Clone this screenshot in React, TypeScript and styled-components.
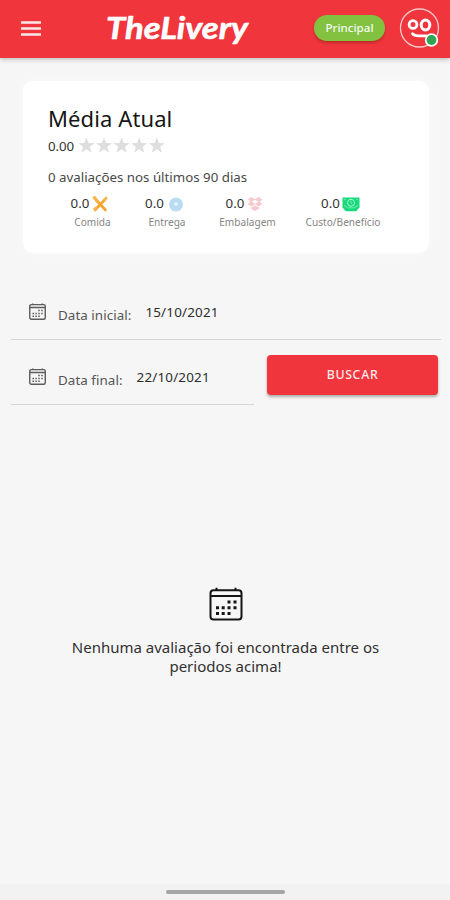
import React from "react";
import styled, { createGlobalStyle } from "styled-components";

const GlobalStyle = createGlobalStyle`
  * { box-sizing: border-box; }
  body {
    margin: 0;
    background: #f6f6f6;
    font-family: "Noto Sans", "Open Sans", sans-serif;
    color: #333;
  }
`;

const Screen = styled.div`
  width: 450px;
  height: 900px;
  display: flex;
  flex-direction: column;
  overflow: hidden;
  background: #f6f6f6;
`;

const Header = styled.header`
  height: 58px;
  flex: none;
  display: flex;
  align-items: flex-start;
  background: #f0353d;
  box-shadow: 0 1px 5px rgba(0, 0, 0, 0.28);
`;

const MenuIcon = styled.svg`
  width: 20px;
  height: 16px;
  margin: 20px 0 0 21px;
`;

const Logo = styled.svg`
  width: 150px;
  height: 50px;
  margin: 6px 0 0 61px;
`;

const LogoText = styled.text`
  font: italic 700 31px Lato, sans-serif;
  fill: #fff;
  stroke: #fff;
  stroke-width: 0.6px;
  stroke-linejoin: round;
`;

const Badge = styled.div`
  width: 71px;
  height: 26px;
  margin: 15px 0 0 62px;
  border-radius: 13px;
  background: #83c241;
  color: #f5f9ef;
  font-size: 11.6px;
  font-weight: 500;
  line-height: 25px;
  text-align: center;
  box-shadow: 0 2px 3px rgba(90, 30, 0, 0.35);
`;

const Avatar = styled.svg`
  width: 42px;
  height: 42px;
  margin: 7px 0 0 14px;
`;

const Card = styled.section`
  flex: none;
  width: 406px;
  height: 172px;
  margin: 23px 0 0 23px;
  padding: 23px 0 0 25px;
  border-radius: 11px;
  background: #fff;
  box-shadow: 0 0 7px rgba(255, 255, 255, 0.8);
`;

const Title = styled.h1`
  margin: 0;
  height: 30px;
  color: #161616;
  font-size: 22px;
  font-weight: 400;
  line-height: 29px;
  letter-spacing: 0.1px;
`;

const ScoreRow = styled.div`
  display: flex;
  align-items: center;
  height: 24px;
  font-size: 13.3px;
  letter-spacing: -0.1px;
`;

const Stars = styled.svg`
  width: 90px;
  height: 18px;
  margin: -3px 0 0 3px;
`;

const Summary = styled.p`
  margin: 9px 0 0;
  height: 20px;
  font-size: 13.3px;
  line-height: 20px;
  color: #484848;
  white-space: nowrap;
`;

const Stats = styled.div`
  display: grid;
  grid-template-columns: 84px 65px 96px 95px;
  margin-top: 7px;
`;

const StatValue = styled.div`
  display: flex;
  justify-content: center;
  align-items: center;
  gap: 2px;
  height: 18px;
  font-size: 13.3px;

  svg {
    width: 18px;
    height: 18px;
    margin-top: 2px;
  }
`;

const StatLabel = styled.div`
  display: flex;
  justify-content: center;
  padding-left: 5px;
  height: 20px;
  font-size: 10.1px;
  line-height: 20px;
  color: #858585;
  white-space: nowrap;
`;

const DateField = styled.div<{ $short?: boolean }>`
  display: flex;
  align-items: flex-start;
  width: ${(p) => (p.$short ? 243 : 430)}px;
  height: ${(p) => (p.$short ? 65 : 51)}px;
  padding: ${(p) => (p.$short ? 27 : 13)}px 0 0 18px;
  margin-left: 11px;
  border-bottom: 1px solid #d6d6d6;
`;

const FieldIcon = styled.svg`
  width: 17px;
  height: 17px;
  margin-top: 1px;
  flex: none;
`;

const FieldLabel = styled.span`
  margin: 3px 0 0 12px;
  font-size: 13.4px;
  line-height: 20px;
  letter-spacing: 0.05px;
  color: #555;
  white-space: nowrap;
`;

const FieldValue = styled.span`
  margin: 1px 0 0 14px;
  font-size: 13.4px;
  line-height: 19px;
  letter-spacing: 0.2px;
  color: #2d2d2d;
`;

const Fields = styled.div`
  flex: none;
  margin-top: 36px;
`;

const FieldRow = styled.div`
  display: flex;
`;

const SearchButton = styled.button`
  width: 171px;
  height: 40px;
  margin: 15px 0 0 13px;
  padding: 0 0 1px;
  border: 0;
  border-radius: 4px;
  background: #f0353d;
  color: #fde9e9;
  font: 500 12.3px "Noto Sans", sans-serif;
  letter-spacing: 0.7px;
  box-shadow: 0 2px 3px rgba(0, 0, 0, 0.3);
`;

const Empty = styled.main`
  flex: 1;
  display: flex;
  flex-direction: column;
  align-items: center;
  padding-top: 182px;
`;

const EmptyIcon = styled.svg`
  width: 34px;
  height: 34px;
  margin-left: 1px;
`;

const EmptyText = styled.p`
  margin: 17px 0 0 1px;
  font-size: 15px;
  line-height: 19px;
  text-align: center;
  color: #303030;
`;

const NavBar = styled.footer`
  flex: none;
  display: flex;
  justify-content: center;
  height: 16px;
  padding-top: 6px;
  background: #f2f2f2;
`;

const NavHandle = styled.div`
  width: 119px;
  height: 4px;
  border-radius: 2px;
  background: #a6a6a6;
`;

const CalendarShape = ({ weight = 2 }: { weight?: number }) => (
  <>
    <rect x="1.500" y="3.200" width="31" height="29.300" rx="3" fill="none" stroke="currentColor" strokeWidth={weight} />
    <path d="M1.500 9h31M7.500 0.800v3M26.500 0.800v3" fill="none" stroke="currentColor" strokeWidth={weight} />
    <path
      d="M18.500 13.500h3v3h-3zM24.500 13.500h3v3h-3zM7 19.300h3v3H7zM12.700 19.300h3v3h-3zM18.500 19.300h3v3h-3zM24.500 19.300h3v3h-3zM7 25h3v3H7zM12.700 25h3v3h-3zM18.500 25h3v3h-3z"
      fill="currentColor"
    />
  </>
);

const STAR = "M8 0.500l2 5.300 5.700.2-4.500 3.400 1.700 5.500L8 11.700 3.100 14.900l1.700-5.500L.3 6 6 5.800z";

const FoodIcon = () => (
  <svg viewBox="0 0 18 18">
    <path d="M3.500 3l11 12M14.500 4L4 15" stroke="#f6a42e" strokeWidth="2.600" strokeLinecap="round" />
    <path d="M1.200 2l3-1 4 5.500L6 8.500zM12 4.500L15.200 1.200l1.600 1.600-3.300 3.500z" fill="#f9b44c" />
    <path d="M2 14l2.500-2.500 2.500 2.500-3 2.500z" fill="#f9b44c" />
  </svg>
);

const DeliveryIcon = () => (
  <svg viewBox="0 0 18 18">
    <circle cx="10" cy="9.500" r="6.900" fill="#b9dcf3" />
    <circle cx="10" cy="9" r="1.800" fill="#edf8fe" />
  </svg>
);

const PackageIcon = () => (
  <svg viewBox="0 0 18 18">
    <path d="M1.800 4.200L5.500 2l3.500 2.300L12.500 2l3.800 2.200-2.300 2.600 2.300 2.400-3.800 2.300L9 9.300l-3.500 2.200-3.700-2.300L4.200 6.800z" fill="#f8c9cf" />
    <path d="M9 4.800l3.400 2L9 8.900 5.700 6.800z" fill="#fff" />
    <path d="M4.500 11.800l1 .6L9 10.300l3.500 2.100 1-.6v1.500L9 16.200l-4.500-2.900z" fill="#f8c9cf" />
  </svg>
);

const MoneyIcon = () => (
  <svg viewBox="0 0 18 18">
    <path d="M.5 2.500h17v9.700l-3.200 4H3.700l-3.200-4z" fill="#18da7c" />
    <circle cx="9" cy="7.800" r="3.500" fill="none" stroke="#a6f2cc" strokeWidth="1" />
    <path d="M9 5.800v2.400l1.300.8M2 5l2-1.200M16 5l-2-1.200M2 10.300l3.500 2.500h7L16 10.300" fill="none" stroke="#8ceabb" strokeWidth=".8" />
  </svg>
);

const stats = [
  { label: "Comida", icon: <FoodIcon /> },
  { label: "Entrega", icon: <DeliveryIcon /> },
  { label: "Embalagem", icon: <PackageIcon /> },
  { label: "Custo/Benefício", icon: <MoneyIcon /> },
];

export default function App() {
  return (
    <Screen>
      <GlobalStyle />
      <Header>
        <MenuIcon viewBox="0 0 20 16">
          <path d="M0 2.500h20M0 8.500h20M0 14.500h20" stroke="#fde8e8" strokeWidth="2.600" />
        </MenuIcon>
        <Logo viewBox="0 0 150 50">
          <LogoText x="4" y="33" textLength="142" lengthAdjust="spacingAndGlyphs">TheLivery</LogoText>
        </Logo>
        <Badge>Principal</Badge>
        <Avatar viewBox="0 0 42 42">
          <circle cx="20.500" cy="21" r="19" fill="none" stroke="#fbc9c9" strokeWidth="1.300" />
          <g fill="none" stroke="#fff">
            <circle cx="14" cy="17.500" r="3.900" strokeWidth="2.800" />
            <ellipse cx="26.500" cy="18" rx="4.300" ry="5" strokeWidth="3" />
            <path d="M13.500 26.700c1.700 2.200 4 2.300 7 2.100h7" strokeWidth="2.800" strokeLinecap="round" />
          </g>
          <circle cx="32.500" cy="33" r="6.700" fill="#fff" />
          <circle cx="32.500" cy="33" r="4.900" fill="#31a354" />
        </Avatar>
      </Header>
      <Card>
        <Title>Média Atual</Title>
        <ScoreRow>
          0.00
          <Stars viewBox="0 0 90 18">
            {[0, 1, 2, 3, 4].map((i) => (
              <path key={i} d={STAR} fill="#dedede" transform={`translate(${1 + i * 17.6} 1) scale(1.05)`} />
            ))}
          </Stars>
        </ScoreRow>
        <Summary>0 avaliações nos últimos 90 dias</Summary>
        <Stats>
          {stats.map((s) => (
            <div key={s.label}>
              <StatValue>
                <span>0.0</span>
                {s.icon}
              </StatValue>
              <StatLabel>{s.label}</StatLabel>
            </div>
          ))}
        </Stats>
      </Card>
      <Fields>
        <DateField>
          <FieldIcon viewBox="0 0 34 34" color="#5c5c5c"><CalendarShape weight={2.800} /></FieldIcon>
          <FieldLabel>Data inicial:</FieldLabel>
          <FieldValue>15/10/2021</FieldValue>
        </DateField>
        <FieldRow>
          <DateField $short>
            <FieldIcon viewBox="0 0 34 34" color="#5c5c5c"><CalendarShape weight={2.800} /></FieldIcon>
            <FieldLabel>Data final:</FieldLabel>
            <FieldValue>22/10/2021</FieldValue>
          </DateField>
          <SearchButton>BUSCAR</SearchButton>
        </FieldRow>
      </Fields>
      <Empty>
        <EmptyIcon viewBox="0 0 34 34" color="#151515"><CalendarShape /></EmptyIcon>
        <EmptyText>
          Nenhuma avaliação foi encontrada entre os
          <br />
          periodos acima!
        </EmptyText>
      </Empty>
      <NavBar><NavHandle /></NavBar>
    </Screen>
  );
}
